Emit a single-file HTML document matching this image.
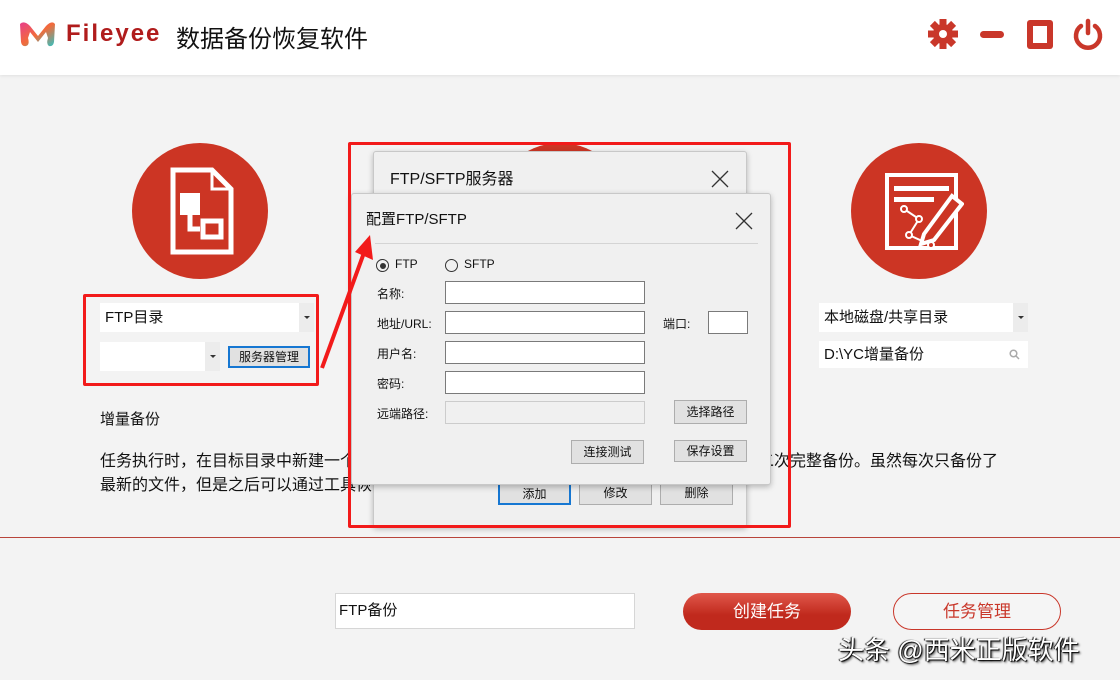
<!DOCTYPE html>
<html><head><meta charset="utf-8"><style>
*{box-sizing:border-box;margin:0;padding:0}
body{width:1120px;height:680px;overflow:hidden;background:#f3f3f3;font-family:"Liberation Sans","Noto Sans CJK SC",sans-serif;position:relative;color:#111}
.a{position:absolute}
.hdr{left:0;top:0;width:1120px;height:75px;background:#fff;box-shadow:0 1px 3px rgba(0,0,0,.08)}
.circ{border-radius:50%;background:#cc3524}
.combo{background:#fff;font-size:15px;padding-left:5px;line-height:29px}
.combo .dd{position:absolute;right:0;top:0;width:16px;height:100%;background:#ececec;border-left:1px solid #fff}
.combo .dd:after{content:"";position:absolute;left:5px;top:13px;border:3px solid transparent;border-top:3px solid #333}
.dlg{background:#f0f0f0;border:1px solid #c8c8c8;box-shadow:0 2px 6px rgba(0,0,0,.25);border-radius:3px}
.inp{background:#fff;border:1px solid #7a7a7a;height:23px}
.btn{background:#e1e1e1;border:1px solid #adadad;font-size:12px;text-align:center;line-height:20px}
.lbl{font-size:12px}
</style></head><body>
<div class="a hdr"></div>
<svg class="a" style="left:18px;top:20px" width="40" height="30" viewBox="0 0 40 30">
<defs><linearGradient id="g" x1="0" y1="0" x2="1" y2="1"><stop offset="0" stop-color="#e83e8c"/><stop offset=".5" stop-color="#f26b3a"/><stop offset="1" stop-color="#2ec4c4"/></linearGradient></defs>
<path d="M2 4 Q6 0 12 6 L20 16 L28 6 Q34 0 37 4 L36 22 Q35 27 31 26 Q28 24 30 18 L28 12 L20 22 L12 12 L10 18 Q12 25 8 26 Q4 27 3 22 Z" fill="url(#g)"/></svg>
<div class="a" style="left:66px;top:20px;font-size:24px;color:#b01c1c;letter-spacing:2px;font-weight:bold">Fileyee</div>
<div class="a" style="left:176px;top:19px;font-size:24px;color:#111">数据备份恢复软件</div>
<svg class="a" style="left:926px;top:17px" width="180" height="36" viewBox="0 0 180 36" fill="#c9372a">
<g transform="translate(17,17)"><circle r="10"/><g id="t"><rect x="-3.5" y="-15" width="7" height="7"/></g><use href="#t" transform="rotate(45)"/><use href="#t" transform="rotate(90)"/><use href="#t" transform="rotate(135)"/><use href="#t" transform="rotate(180)"/><use href="#t" transform="rotate(225)"/><use href="#t" transform="rotate(270)"/><use href="#t" transform="rotate(315)"/><circle r="4" fill="#fff"/></g>
<rect x="54" y="14" width="24" height="7" rx="3.5"/>
<rect x="101" y="3" width="26" height="29" rx="3"/><rect x="107" y="9" width="14" height="17" fill="#fff"/>
<path d="M162 4 V16" stroke="#c9372a" stroke-width="4.5" stroke-linecap="round"/>
<path d="M155 9 A12 12 0 1 0 169 9" stroke="#c9372a" stroke-width="4.5" fill="none" stroke-linecap="round"/>
</svg>
<!-- left circle -->
<div class="a circ" style="left:132px;top:143px;width:136px;height:136px"></div>
<svg class="a" style="left:170px;top:167px" width="64" height="88" viewBox="0 0 64 88" fill="none" stroke="#fff" stroke-width="5">
<path d="M3 3 H42 L61 22 V85 H3 Z"/><path d="M42 3 V22 H61" stroke-width="3"/>
<rect x="10" y="26" width="20" height="22" fill="#fff" stroke="none"/><path d="M20 48 V62 H30"/><rect x="33" y="54" width="18" height="16"/></svg>
<div class="a circ" style="left:492px;top:143px;width:136px;height:136px"></div>
<div class="a circ" style="left:851px;top:143px;width:136px;height:136px"></div>
<svg class="a" style="left:884px;top:172px" width="80" height="78" viewBox="0 0 80 78" stroke="#fff" fill="none">
<path d="M3 3 H72 V76 H3 Z" stroke-width="4"/><rect x="10" y="14" width="55" height="5" fill="#fff" stroke="none"/><rect x="10" y="25" width="40" height="5" fill="#fff" stroke="none"/>
<path d="M20 37 L35 47 L25 63 L47 73" stroke-width="2"/><circle cx="20" cy="37" r="3" fill="#cc3524" stroke-width="2"/><circle cx="35" cy="47" r="3" fill="#cc3524" stroke-width="2"/><circle cx="25" cy="63" r="3" fill="#cc3524" stroke-width="2"/><circle cx="47" cy="73" r="3" fill="#cc3524" stroke-width="2"/>
<path d="M40 62 L68 24 L78 32 L50 68 L37 72 Z" fill="#cc3524" stroke-width="4"/></svg>
<div class="a" style="left:83px;top:294px;width:236px;height:92px;border:3px solid #f21a1a;border-radius:2px"></div>
<div class="a combo" style="left:100px;top:303px;width:214px;height:29px">FTP目录<span class="dd"></span></div>
<div class="a combo" style="left:100px;top:342px;width:120px;height:29px"><span class="dd"></span></div>
<div class="a btn" style="left:228px;top:346px;width:82px;height:22px;border:2px solid #1677d2;line-height:18px">服务器管理</div>
<div class="a" style="left:100px;top:408px;font-size:15px">增量备份</div>
<div class="a" style="left:100px;top:450px;font-size:16px;line-height:24px;width:960px;white-space:nowrap">任务执行时，在目标目录中新建一个</div>
<div class="a" style="left:100px;top:474px;font-size:16px;line-height:24px;white-space:nowrap">最新的文件，但是之后可以通过工具恢</div>
<div class="a" style="left:742px;top:450px;font-size:16px;line-height:24px;white-space:nowrap">第二次完整备份。虽然每次只备份了</div>
<div class="a combo" style="left:819px;top:303px;width:209px;height:29px">本地磁盘/共享目录<span class="dd"></span></div>
<div class="a combo" style="left:819px;top:341px;width:209px;height:27px;line-height:27px">D:\YC增量备份<svg style="position:absolute;right:8px;top:8px" width="11" height="11"><circle cx="4.5" cy="4.5" r="3.3" stroke="#aaa" stroke-width="1.5" fill="none"/><path d="M7 7 L10 10" stroke="#aaa" stroke-width="1.5"/></svg></div>
<!-- back dialog -->
<div class="a dlg" style="left:373px;top:151px;width:374px;height:376px"></div>
<div class="a" style="left:390px;top:165px;font-size:16px">FTP/SFTP服务器</div>
<svg class="a" style="left:711px;top:170px" width="18" height="18"><path d="M1 1 L17 17 M17 1 L1 17" stroke="#333" stroke-width="1.3"/></svg>
<div class="a btn" style="left:498px;top:482px;width:73px;height:23px;border:2px solid #1677d2">添加</div>
<div class="a btn" style="left:579px;top:482px;width:73px;height:23px">修改</div>
<div class="a btn" style="left:660px;top:482px;width:73px;height:23px">删除</div>
<!-- front dialog -->
<div class="a dlg" style="left:351px;top:193px;width:420px;height:292px"></div>
<div class="a" style="left:366px;top:208px;font-size:15px">配置FTP/SFTP</div>
<svg class="a" style="left:735px;top:212px" width="18" height="18"><path d="M1 1 L17 17 M17 1 L1 17" stroke="#333" stroke-width="1.3"/></svg>
<div class="a" style="left:375px;top:243px;width:383px;height:1px;background:#d4d4d4"></div>
<div class="a" style="left:376px;top:259px;width:13px;height:13px;border:1px solid #333;border-radius:50%"><div style="margin:2.5px;width:6px;height:6px;background:#333;border-radius:50%"></div></div>
<div class="a lbl" style="left:395px;top:257px">FTP</div>
<div class="a" style="left:445px;top:259px;width:13px;height:13px;border:1px solid #333;border-radius:50%"></div>
<div class="a lbl" style="left:464px;top:257px">SFTP</div>
<div class="a lbl" style="left:377px;top:285px">名称:</div>
<div class="a lbl" style="left:377px;top:315px">地址/URL:</div>
<div class="a lbl" style="left:377px;top:345px">用户名:</div>
<div class="a lbl" style="left:377px;top:375px">密码:</div>
<div class="a lbl" style="left:377px;top:405px">远端路径:</div>
<div class="a lbl" style="left:663px;top:315px">端口:</div>
<div class="a inp" style="left:445px;top:281px;width:200px"></div>
<div class="a inp" style="left:445px;top:311px;width:200px"></div>
<div class="a inp" style="left:445px;top:341px;width:200px"></div>
<div class="a inp" style="left:445px;top:371px;width:200px"></div>
<div class="a inp" style="left:445px;top:401px;width:200px;background:#f0f0f0;border-color:#ccc"></div>
<div class="a inp" style="left:708px;top:311px;width:40px"></div>
<div class="a btn" style="left:674px;top:400px;width:73px;height:24px;line-height:22px">选择路径</div>
<div class="a btn" style="left:571px;top:440px;width:73px;height:24px;line-height:22px">连接测试</div>
<div class="a btn" style="left:674px;top:440px;width:73px;height:22px">保存设置</div>
<div class="a" style="left:348px;top:142px;width:443px;height:386px;border:3px solid #f21a1a;border-radius:2px"></div>
<svg class="a" style="left:315px;top:230px" width="70" height="145"><path d="M7 138 L50 20" stroke="#f21a1a" stroke-width="4"/><path d="M55 5 L58 30 L40 22 Z" fill="#f21a1a"/></svg>
<div class="a" style="left:0;top:537px;width:1120px;height:1px;background:#b8443a"></div>
<div class="a" style="left:335px;top:593px;width:300px;height:36px;background:#fff;border:1px solid #d6d6d6;font-size:15px;line-height:34px;padding-left:3px">FTP备份</div>
<div class="a" style="left:683px;top:593px;width:168px;height:37px;border-radius:19px;background:linear-gradient(#e0574a,#c0291d 60%);color:#fff;font-size:17px;text-align:center;line-height:37px">创建任务</div>
<div class="a" style="left:893px;top:593px;width:168px;height:37px;border-radius:19px;border:1px solid #c9372a;color:#c9372a;font-size:17px;text-align:center;line-height:35px;background:#f5f5f5">任务管理</div>
<div class="a" style="left:838px;top:630px;font-size:26px;color:#fff;text-shadow:1px 1px 1px #000,-1px 0 1px #000,2px 2px 2px rgba(0,0,0,.6)">头条 @西米正版软件</div>
</body></html>
